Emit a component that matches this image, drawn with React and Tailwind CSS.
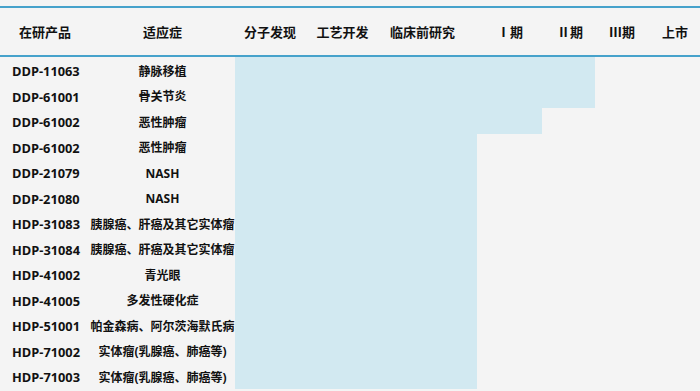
const phases = [
  { label: "分子发现", w: "w-[70px]" },
  { label: "工艺开发", w: "w-[75px]" },
  { label: "临床前研究", w: "w-[85px]" },
  { label: "Ⅰ期", w: "w-[90px]" },
  { label: "Ⅱ期", w: "w-[30px]" },
  { label: "Ⅲ期", w: "w-[74px]" },
  { label: "上市", w: "w-[32px]" },
];

const products = [
  { code: "DDP-11063", name: "静脉移植", bar: 360 },
  { code: "DDP-61001", name: "骨关节炎", bar: 360 },
  { code: "DDP-61002", name: "恶性肿瘤", bar: 307 },
  { code: "DDP-61002", name: "恶性肿瘤", bar: 242 },
  { code: "DDP-21079", name: "NASH", bar: 242 },
  { code: "DDP-21080", name: "NASH", bar: 242 },
  { code: "HDP-31083", name: "胰腺癌、肝癌及其它实体瘤", bar: 242 },
  { code: "HDP-31084", name: "胰腺癌、肝癌及其它实体瘤", bar: 242 },
  { code: "HDP-41002", name: "青光眼", bar: 242 },
  { code: "HDP-41005", name: "多发性硬化症", bar: 242 },
  { code: "HDP-51001", name: "帕金森病、阿尔茨海默氏病", bar: 242 },
  { code: "HDP-71002", name: "实体瘤(乳腺癌、肺癌等)", bar: 242 },
  { code: "HDP-71003", name: "实体瘤(乳腺癌、肺癌等)", bar: 242 },
];

export default function App() {
  return (
    <div
      className="w-[700px] h-[391px] overflow-hidden bg-[#f4f4f4] text-[#111] font-bold pt-[6px]"
      style={{ fontFamily: '"Open Sans", "Noto Sans CJK SC", sans-serif' }}
    >
      <div className="flex items-center h-[51px] border-t-2 border-b-2 border-[#46a2cb] text-[13px] pt-[3px]">
        <div className="w-[90px] text-center">在研产品</div>
        <div className="w-[145px] text-center">适应症</div>
        {phases.map((p) => (
          <div key={p.label} className={`${p.w} text-center`}>
            {p.label}
          </div>
        ))}
      </div>

      <div className="flex flex-col">
        {products.map((p, i) => (
          <div key={i} className="flex h-[25.5px]">
            <div className="w-[90px] pl-[12px] flex items-center pt-[4px] text-[12.8px]">
              {p.code}
            </div>
            <div className="w-[145px] flex items-center justify-center pt-[4px] whitespace-nowrap text-[12px]">
              <span className="bg-[#f4f4f4]">{p.name}</span>
            </div>
            <div className="flex-1">
              <div className="h-full bg-[#d2e9f1]" style={{ width: p.bar }} />
            </div>
          </div>
        ))}
      </div>
    </div>
  );
}
